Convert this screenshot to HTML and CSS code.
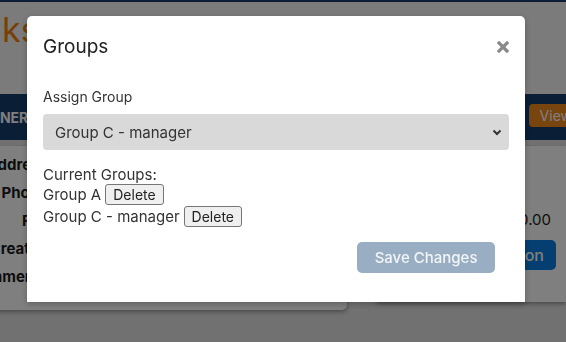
FILE: index.html
```html
<!DOCTYPE html>
<html lang="en">
<head>
  <meta charset="UTF-8">
  <title>Partner Details</title>
  <link rel="stylesheet" href="styles.css">
</head>
<body>
  <div class="page">
    <div class="topline"></div>
    <header class="site-header">
      <h1 class="brand">ks</h1>
    </header>
    <nav class="navbar">
      <span class="nav-title">PARTNER</span>
      <button class="btn-view">View</button>
    </nav>
    <main class="content">
      <section class="card info-card">
        <div class="row"><span class="label">Address:</span></div>
        <div class="row"><span class="label">Phone:</span></div>
        <div class="row"><span class="label">Fax:</span></div>
        <div class="row"><span class="label">Created:</span></div>
        <div class="row"><span class="label">Comments:</span></div>
      </section>
      <section class="card side-card">
        <p class="price">$0.00</p>
        <button class="btn-blue">Add Transaction</button>
      </section>
    </main>
  </div>

  <div class="backdrop"></div>

  <div class="modal">
    <div class="modal-header">
      <h5 class="modal-title">Groups</h5>
      <button class="close" aria-label="Close">
        <svg width="12" height="12" viewBox="0 0 12 12">
          <path d="M2 2 L10 10 M10 2 L2 10" stroke="#8a8a8a" stroke-width="3.2" stroke-linecap="square" fill="none"/>
        </svg>
      </button>
    </div>
    <div class="modal-body">
      <label for="group" class="field-label">Assign Group</label>
      <div class="select-wrap">
        <select id="group" class="group-select">
          <option>Group A</option>
          <option>Group B</option>
          <option selected>Group C - manager</option>
        </select>
        <svg class="chevron" width="10" height="7" viewBox="0 0 10 7">
          <path d="M1.5 1.5 L5 5 L8.5 1.5" stroke="#333" stroke-width="2" fill="none"/>
        </svg>
      </div>
      <div class="current">
        <div class="line">Current Groups:</div>
        <div class="line group-line"><span>Group A</span><button class="btn-delete">Delete</button></div>
        <div class="line group-line"><span>Group C - manager</span><button class="btn-delete">Delete</button></div>
      </div>
    </div>
    <div class="modal-footer">
      <button class="btn-save" disabled>Save Changes</button>
    </div>
  </div>
</body>
</html>
```

FILE: styles.css
```css
body {
  margin: 0;
  width: 566px;
  height: 342px;
  overflow: hidden;
  font-family: Inter, "Open Sans", sans-serif;
  color: #333;
  background-color: #e2e2e2;
}

.topline {
  height: 2px;
  background-color: #163c6a;
}

.site-header {
  height: 92px;
  background-color: #f6f6f6;
}

.brand {
  margin: 0;
  padding-top: 8px;
  margin-left: 2px;
  font-size: 34px;
  line-height: 40px;
  font-weight: 400;
  color: #f07f10;
}

.navbar {
  height: 46px;
  display: flex;
  align-items: center;
  justify-content: space-between;
  background-color: #143d6b;
}

.nav-title {
  margin-left: -37px;
  font-size: 14px;
  font-weight: 700;
  color: #ffffff;
}

.btn-view {
  margin: 0 -36px 3px 0;
  height: 23px;
  padding: 0 30px 0 11px;
  border: none;
  border-radius: 4px;
  background-color: #f08a1c;
  color: #fff;
  font-family: inherit;
  font-size: 14px;
}

.content {
  display: flex;
  gap: 28px;
  padding-top: 6px;
}

.card {
  background: white;
  border-radius: 5px;
  box-shadow: 0 2px 4px rgba(0, 0, 0, 0.35);
}

.info-card {
  margin-left: -40px;
  width: 387px;
  padding: 5px 0 19px;
}

.row {
  display: flex;
  line-height: 28px;
  font-size: 15px;
}

.label {
  width: 93px;
  text-align: right;
  font-weight: 700;
  color: #1b1b1b;
}

.side-card {
  flex: 1;
  display: flex;
  flex-direction: column;
  align-items: flex-end;
  justify-content: flex-end;
  box-sizing: border-box;
  height: 156px;
  padding: 0 10px 32px 0;
  border-radius: 5px 0 0 5px;
}

.price {
  margin: 0 5px 9px 0;
  font-size: 15px;
  line-height: 22px;
  color: #1b1b1b;
}

.btn-blue {
  height: 30px;
  padding: 0 12px;
  border: none;
  border-radius: 5px;
  background-color: #0a7ce0;
  color: #fff;
  font-family: inherit;
  font-size: 16px;
  font-weight: 500;
}

.backdrop {
  position: fixed;
  inset: 0;
  background-color: rgba(0, 0, 0, 0.5);
}

.modal {
  position: fixed;
  top: 16px;
  left: 27px;
  width: 498px;
  background: white;
  border-radius: 5px 5px 0 0;
  box-shadow: 0 2px 6px rgba(0, 0, 0, 0.25);
}

.modal-header {
  display: flex;
  align-items: center;
  justify-content: space-between;
  padding: 16px 16px 0;
}

.modal-title {
  margin: 0;
  font-size: 19px;
  line-height: 30px;
  font-weight: 400;
  color: #222;
}

.close {
  display: flex;
  padding: 0;
  border: none;
  background: none;
}

.modal-body {
  padding: 24px 16px 0;
}

.field-label {
  display: block;
  margin-bottom: 7px;
  font-size: 14px;
  line-height: 21px;
}

.select-wrap {
  position: relative;
}

.group-select {
  appearance: none;
  width: 100%;
  height: 36px;
  padding: 0 12px;
  border: none;
  border-radius: 4px;
  background-color: #d9d9d9;
  color: #333;
  font-family: inherit;
  font-size: 15px;
}

.chevron {
  position: absolute;
  right: 7px;
  top: 15px;
}

.current {
  margin-top: 15px;
  font-size: 15px;
}

.line {
  line-height: 19px;
}

.group-line {
  display: flex;
  align-items: center;
  gap: 4px;
  height: 21.5px;
}

.btn-delete {
  height: 21px;
  padding: 0 7px;
  border: 1px solid #767676;
  border-radius: 3px;
  background-color: #efefef;
  color: #222;
  font-family: inherit;
  font-size: 14px;
}

.modal-footer {
  display: flex;
  justify-content: flex-end;
  padding: 15px 30px 29px;
}

.btn-save {
  height: 31px;
  padding: 0 17.5px;
  border: none;
  border-radius: 5px;
  background-color: #9aaec3;
  color: #f2f5f8;
  font-family: inherit;
  font-size: 15px;
  font-weight: 500;
}
```
